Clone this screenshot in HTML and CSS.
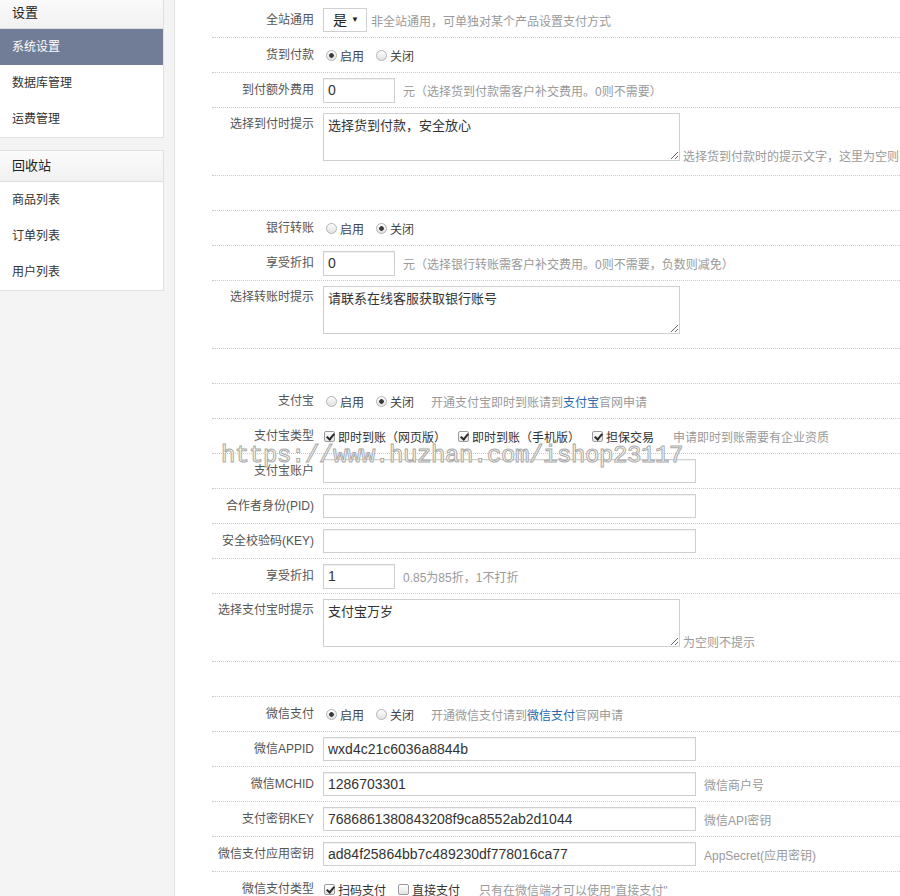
FILE: index.html
```html
<!DOCTYPE html>
<html lang="zh-CN">
<head>
    <meta charset="UTF-8">
    <title>系统设置</title>
    <link rel="stylesheet" href="styles.css">
</head>
<body>
<div class="layout">
    <aside class="sidebar">
        <div class="menu-box first">
            <div class="menu-title">设置</div>
            <ul class="menu">
                <li class="active"><a href="#">系统设置</a></li>
                <li><a href="#">数据库管理</a></li>
                <li><a href="#">运费管理</a></li>
            </ul>
        </div>
        <div class="menu-box">
            <div class="menu-title">回收站</div>
            <ul class="menu">
                <li><a href="#">商品列表</a></li>
                <li><a href="#">订单列表</a></li>
                <li><a href="#">用户列表</a></li>
            </ul>
        </div>
    </aside>

    <main class="main">
        <div class="form-rows">
            <!-- 货到付款 -->
            <div class="row">
                <div class="label">全站通用</div>
                <div class="field">
                    <span class="select-wrap">
                        <select class="select">
                            <option>是</option>
                            <option>否</option>
                        </select>
                    </span>
                    <span class="hint hint-near">非全站通用，可单独对某个产品设置支付方式</span>
                </div>
            </div>
            <div class="row">
                <div class="label">货到付款</div>
                <div class="field">
                    <label class="opt"><input type="radio" name="cod" checked>启用</label>
                    <label class="opt"><input type="radio" name="cod">关闭</label>
                </div>
            </div>
            <div class="row">
                <div class="label">到付额外费用</div>
                <div class="field">
                    <input type="text" class="input input-sm" value="0">
                    <span class="hint">元（选择货到付款需客户补交费用。0则不需要）</span>
                </div>
            </div>
            <div class="row row-tall">
                <div class="label">选择到付时提示</div>
                <div class="field field-bottom">
                    <textarea class="textarea">选择货到付款，安全放心</textarea>
                    <span class="hint hint-side">选择货到付款时的提示文字，这里为空则不提示</span>
                </div>
            </div>
            <div class="row"></div>

            <!-- 银行转账 -->
            <div class="row">
                <div class="label">银行转账</div>
                <div class="field">
                    <label class="opt"><input type="radio" name="bank">启用</label>
                    <label class="opt"><input type="radio" name="bank" checked>关闭</label>
                </div>
            </div>
            <div class="row">
                <div class="label">享受折扣</div>
                <div class="field">
                    <input type="text" class="input input-sm" value="0">
                    <span class="hint">元（选择银行转账需客户补交费用。0则不需要，负数则减免）</span>
                </div>
            </div>
            <div class="row row-tall">
                <div class="label">选择转账时提示</div>
                <div class="field field-bottom">
                    <textarea class="textarea">请联系在线客服获取银行账号</textarea>
                </div>
            </div>
            <div class="row"></div>

            <!-- 支付宝 -->
            <div class="row">
                <div class="label">支付宝</div>
                <div class="field">
                    <label class="opt"><input type="radio" name="alipay">启用</label>
                    <label class="opt"><input type="radio" name="alipay" checked>关闭</label>
                    <span class="hint">开通支付宝即时到账请到<a href="#" class="link">支付宝</a>官网申请</span>
                </div>
            </div>
            <div class="row">
                <div class="label">支付宝类型</div>
                <div class="field">
                    <label class="opt opt-check"><input type="checkbox" checked>即时到账（网页版）</label>
                    <label class="opt opt-check"><input type="checkbox" checked>即时到账（手机版）</label>
                    <label class="opt opt-check"><input type="checkbox" checked>担保交易</label>
                    <span class="hint">申请即时到账需要有企业资质</span>
                </div>
            </div>
            <div class="row">
                <div class="label">支付宝账户</div>
                <div class="field"><input type="text" class="input input-lg" value=""></div>
            </div>
            <div class="row">
                <div class="label">合作者身份(PID)</div>
                <div class="field"><input type="text" class="input input-lg" value=""></div>
            </div>
            <div class="row">
                <div class="label">安全校验码(KEY)</div>
                <div class="field"><input type="text" class="input input-lg" value=""></div>
            </div>
            <div class="row">
                <div class="label">享受折扣</div>
                <div class="field">
                    <input type="text" class="input input-sm" value="1">
                    <span class="hint">0.85为85折，1不打折</span>
                </div>
            </div>
            <div class="row row-tall">
                <div class="label">选择支付宝时提示</div>
                <div class="field field-bottom">
                    <textarea class="textarea">支付宝万岁</textarea>
                    <span class="hint hint-side">为空则不提示</span>
                </div>
            </div>
            <div class="row"></div>

            <!-- 微信支付 -->
            <div class="row">
                <div class="label">微信支付</div>
                <div class="field">
                    <label class="opt"><input type="radio" name="wechat" checked>启用</label>
                    <label class="opt"><input type="radio" name="wechat">关闭</label>
                    <span class="hint">开通微信支付请到<a href="#" class="link">微信支付</a>官网申请</span>
                </div>
            </div>
            <div class="row">
                <div class="label">微信APPID</div>
                <div class="field"><input type="text" class="input input-lg" value="wxd4c21c6036a8844b"></div>
            </div>
            <div class="row">
                <div class="label">微信MCHID</div>
                <div class="field">
                    <input type="text" class="input input-lg" value="1286703301">
                    <span class="hint">微信商户号</span>
                </div>
            </div>
            <div class="row">
                <div class="label">支付密钥KEY</div>
                <div class="field">
                    <input type="text" class="input input-lg" value="7686861380843208f9ca8552ab2d1044">
                    <span class="hint">微信API密钥</span>
                </div>
            </div>
            <div class="row">
                <div class="label">微信支付应用密钥</div>
                <div class="field">
                    <input type="text" class="input input-lg" value="ad84f25864bb7c489230df778016ca77">
                    <span class="hint">AppSecret(应用密钥)</span>
                </div>
            </div>
            <div class="row">
                <div class="label">微信支付类型</div>
                <div class="field">
                    <label class="opt opt-check"><input type="checkbox" checked>扫码支付</label>
                    <label class="opt opt-check"><input type="checkbox">直接支付</label>
                    <span class="hint">只有在微信端才可以使用"直接支付"</span>
                </div>
            </div>
        </div>

        <div class="watermark">https://www.huzhan.com/ishop23117</div>
    </main>
</div>
</body>
</html>
```

FILE: styles.css
```css
html, body {
    margin: 0;
    height: 100%;
    overflow: hidden;
}
body {
    font-family: "Liberation Sans", "Noto Sans CJK SC", sans-serif;
    font-size: 12px;
    color: #333;
    background-color: #fff;
}
a {
    text-decoration: none;
}

.layout {
    display: flex;
    height: 100%;
}

/* 左侧菜单 */
.sidebar {
    width: 164px;
    padding-right: 10px;
    flex-shrink: 0;
    background-color: #f4f4f4;
    border-right: 1px solid #e2e2e2;
}
.menu-box {
    background-color: #fff;
    border: 1px solid #e0e0e0;
    border-left: 0;
    margin-bottom: 12px;
}
.menu-box.first {
    margin-top: -3px;
}
.menu-title {
    height: 30px;
    line-height: 30px;
    padding-left: 12px;
    font-size: 13px;
    color: #222;
    background: linear-gradient(#fbfbfb, #f1f1f1);
    border-bottom: 1px solid #dedede;
}
.menu {
    list-style: none;
    margin: 0;
    padding: 0;
}
.menu li a {
    display: block;
    height: 36px;
    line-height: 36px;
    padding-left: 12px;
    color: #333;
}
.menu li.active a {
    background-color: #717d97;
    color: #fff;
}

/* 右侧表单 */
.main {
    flex: 1;
    position: relative;
    overflow: hidden;
    padding: 3px 0 0 37px;
}
.row {
    display: flex;
    align-items: center;
    height: 34px;
    border-bottom: 1px dotted #c9c9c9;
    white-space: nowrap;
}
.row-tall {
    height: 67px;
    align-items: flex-start;
}
.label {
    width: 102px;
    padding-right: 4px;
    flex-shrink: 0;
    text-align: right;
    color: #555;
    line-height: 18px;
}
.row-tall .label {
    padding-top: 7px;
}
.field {
    display: flex;
    align-items: center;
    padding-left: 5px;
}
.field-bottom {
    align-items: flex-end;
    padding-top: 5px;
}

.input {
    height: 24px;
    box-sizing: border-box;
    margin: 0;
    padding: 0 4px;
    border: 1px solid #cfcfcf;
    box-shadow: inset 0 1px 1px rgba(0, 0, 0, 0.06);
    font-family: "Liberation Sans", sans-serif;
    font-size: 14px;
    color: #333;
    outline: none;
}
.input-sm {
    width: 72px;
    height: 25px;
}
.input-lg {
    width: 373px;
}
.textarea {
    width: 357px;
    height: 48px;
    box-sizing: border-box;
    margin: 0;
    padding: 3px 4px;
    border: 1px solid #cfcfcf;
    font-family: "Liberation Sans", "Noto Sans CJK SC", sans-serif;
    font-size: 13px;
    line-height: 18px;
    color: #333;
    outline: none;
}

.select-wrap {
    position: relative;
    display: inline-block;
}
.select {
    appearance: none;
    -webkit-appearance: none;
    width: 44px;
    height: 24px;
    margin: 0;
    padding: 0 0 0 9px;
    border: 1px solid #cfcfcf;
    background-color: #fff;
    font-family: "Liberation Sans", "Noto Sans CJK SC", sans-serif;
    font-size: 14px;
    color: #222;
}
.select-wrap::after {
    content: "▼";
    position: absolute;
    right: 8px;
    top: 7px;
    font-size: 8px;
    line-height: 10px;
    color: #222;
    pointer-events: none;
}

.hint {
    margin-left: 8px;
    color: #9a9a9a;
}
.hint-near {
    margin-left: 4px;
}
.hint-side {
    margin-left: 3px;
    margin-bottom: -3px;
    line-height: 14px;
}
.link {
    color: #2a66ad;
}

/* 单选 / 复选 */
.opt {
    display: inline-flex;
    align-items: center;
    margin-right: 9px;
    color: #444;
}
.opt input {
    appearance: none;
    -webkit-appearance: none;
    position: relative;
    width: 11px;
    height: 11px;
    margin: 0 3px 0 3px;
    border: 1px solid #b3b3b3;
    box-sizing: border-box;
}
.opt input[type="radio"] {
    border-radius: 50%;
    background: linear-gradient(#fdfdfd, #e2e2e2);
}
.opt input[type="radio"]:checked {
    background: radial-gradient(circle, #3a3a3a 0 2px, transparent 2.6px), linear-gradient(#fdfdfd, #e2e2e2);
}
.opt-check {
    margin-right: 11px;
    color: #333;
}
.opt-check input {
    margin: 0 3px 0 1px;
    border-color: #9c9c9c;
    border-radius: 2px;
    background: linear-gradient(#fff, #e4e4e4);
}
.opt-check input:checked::after {
    content: "";
    position: absolute;
    left: 3px;
    top: 0px;
    width: 3px;
    height: 6px;
    border-right: 2px solid #2b2b2b;
    border-bottom: 2px solid #2b2b2b;
    transform: rotate(40deg);
}

.watermark {
    position: absolute;
    left: 46px;
    top: 444px;
    font-family: "Liberation Mono", monospace;
    font-size: 24px;
    line-height: 24px;
    letter-spacing: -0.4px;
    white-space: nowrap;
    color: #fff;
    -webkit-text-stroke: 1px #a9a9a9;
    pointer-events: none;
}
```
